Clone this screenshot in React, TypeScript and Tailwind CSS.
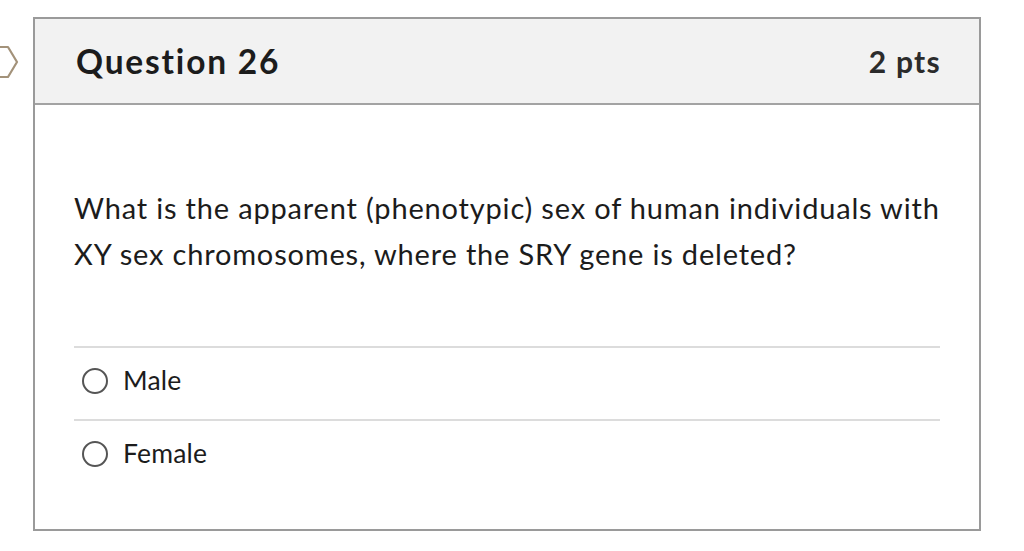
import React from 'react';

const options = ['Male', 'Female'];

const FlagMarker: React.FC = () => (
  <svg width="20" height="34" viewBox="0 0 20 34" className="block">
    <polyline
      points="-6,2 8,2 17,17 8,32 -6,32"
      fill="none"
      stroke="#a3927a"
      strokeWidth="2.2"
      strokeLinejoin="round"
    />
  </svg>
);

const App: React.FC = () => {
  return (
    <div className="w-[1024px] h-[551px] bg-white overflow-hidden font-['Lato','Liberation_Sans',sans-serif] text-[#1c1c1c]">
      <div className="flex pt-[17px]">
        <div className="w-[33px] shrink-0 pt-[28px]">
          <FlagMarker />
        </div>
        <div className="w-[948px] h-[514px] border-2 border-[#9a9a9a] flex flex-col">
          <div className="h-[86px] shrink-0 bg-[#f2f2f2] border-b-2 border-[#a3a3a3] flex items-center justify-between pl-[41px] pr-[38px]">
            <h2 className="text-[33.5px] font-bold tracking-[1.8px]">Question 26</h2>
            <span className="text-[30px] font-bold tracking-[1.3px] text-[#2b2b2b]">2 pts</span>
          </div>
          <div className="flex-1 px-[39px] pt-[80px]">
            <p className="text-[29px] leading-[46px] tracking-[0.82px]">
              What is the apparent (phenotypic) sex of human individuals with XY sex chromosomes, where the SRY gene is deleted?
            </p>
            <div className="mt-[69px]">
              {options.map((o) => (
                <div key={o} className="border-t-2 border-[#dcdcdc] h-[73px] flex items-center gap-[15px] pl-[8px] pb-[5px]">
                  <span className="w-[26px] h-[26px] rounded-full border-2 border-[#555]" />
                  <span className="text-[26.5px] tracking-[0.2px]">{o}</span>
                </div>
              ))}
            </div>
          </div>
        </div>
      </div>
    </div>
  );
};

export default App;
